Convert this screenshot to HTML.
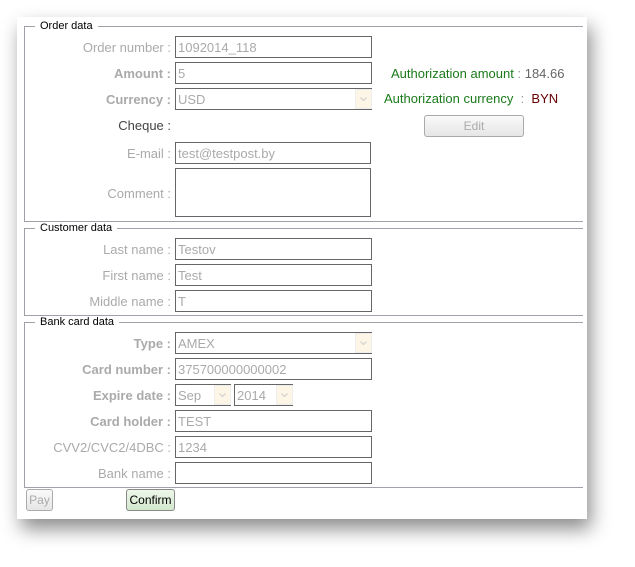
<!DOCTYPE html><html><head><style>
body{margin:0;width:635px;height:567px;background:#fff;position:relative;font-family:"Liberation Sans",sans-serif;font-size:13px;overflow:hidden}
.panel{position:absolute;left:17px;top:17px;width:570px;height:502px;background:#fff;box-shadow:4px 10px 18px rgba(0,0,0,.45)}
.fs{position:absolute;left:24px;width:558px;border:1px solid #a0a0a8;border-right:none}
.lg{position:absolute;top:-7px;left:10px;background:#fff;padding:0 5px;font-size:11px;color:#000;line-height:13px}
.l{position:absolute;right:464px;color:#aaa;white-space:nowrap;text-align:right}
.b{font-weight:bold}
.i{position:absolute;left:175px;border:1px solid #666;color:#aaa;line-height:21px;padding-left:2px;box-sizing:border-box;width:197px;height:22px}
.arr{position:absolute;top:0;right:-1px;width:17px;height:20px;background:#fdf6e6;border:1px solid #eee;box-sizing:border-box}
.arr svg{position:absolute;left:4px;top:7px}
.btn{position:absolute;border:1px solid #aaa;border-radius:3px;background:linear-gradient(#fafafa,#e6e6e6);text-align:center;color:#aaa;font-size:12px;box-sizing:border-box}
</style></head><body>
<div class="panel"></div>
<div class="fs" style="top:26px;height:194px"><span class="lg">Order data</span></div>
<div class="fs" style="top:228px;height:86px"><span class="lg">Customer data</span></div>
<div class="fs" style="top:322px;height:164px"><span class="lg">Bank card data</span></div>

<div class="l" style="top:40px">Order number :</div><div class="i" style="top:36px">1092014_118</div>
<div class="l b" style="top:66px">Amount :</div><div class="i" style="top:62px">5</div>
<div class="l b" style="top:92px">Currency :</div><div class="i" style="top:88px">USD<div class="arr"><svg width="7" height="5"><path d="M0.5 0.5L3.5 3.5L6.5 0.5" stroke="#ccc" fill="none"/></svg></div></div>
<div class="l" style="top:118px;color:#444">Cheque :</div>
<div class="l" style="top:146px">E-mail :</div><div class="i" style="top:142px;width:196px">test@testpost.by</div>
<div class="l" style="top:186px">Comment :</div><div class="i" style="top:168px;height:49px;width:196px"></div>

<div style="position:absolute;left:391px;top:66px;color:#1a7a1a">Authorization amount <span style="color:#999">:</span> <span style="color:#666">184.66</span></div>
<div style="position:absolute;left:384px;top:91px;color:#1a7a1a">Authorization currency <span style="color:#999">&nbsp;:</span> &nbsp;<span style="color:#600">BYN</span></div>
<div class="btn" style="left:424px;top:115px;width:100px;height:22px;line-height:20px">Edit</div>

<div class="l" style="top:242px">Last name :</div><div class="i" style="top:238px">Testov</div>
<div class="l" style="top:268px">First name :</div><div class="i" style="top:264px">Test</div>
<div class="l" style="top:294px">Middle name :</div><div class="i" style="top:290px">T</div>

<div class="l b" style="top:336px">Type :</div><div class="i" style="top:332px">AMEX<div class="arr"><svg width="7" height="5"><path d="M0.5 0.5L3.5 3.5L6.5 0.5" stroke="#ccc" fill="none"/></svg></div></div>
<div class="l b" style="top:362px">Card number :</div><div class="i" style="top:358px">375700000000002</div>
<div class="l b" style="top:388px">Expire date :</div>
<div class="i" style="top:384px;width:56px">Sep<div class="arr"><svg width="7" height="5"><path d="M0.5 0.5L3.5 3.5L6.5 0.5" stroke="#ccc" fill="none"/></svg></div></div>
<div class="i" style="top:384px;left:234px;width:59px">2014<div class="arr"><svg width="7" height="5"><path d="M0.5 0.5L3.5 3.5L6.5 0.5" stroke="#ccc" fill="none"/></svg></div></div>
<div class="l b" style="top:414px">Card holder :</div><div class="i" style="top:410px">TEST</div>
<div class="l" style="top:440px">CVV2/CVC2/4DBC :</div><div class="i" style="top:436px">1234</div>
<div class="l" style="top:466px">Bank name :</div><div class="i" style="top:462px"></div>

<div class="btn" style="left:26px;top:489px;width:27px;height:22px;line-height:20px">Pay</div>
<div class="btn" style="left:126px;top:489px;width:49px;height:22px;line-height:20px;color:#000;border-color:#888;background:linear-gradient(#eef7ea,#d2e8cc)">Confirm</div>
</body></html>
